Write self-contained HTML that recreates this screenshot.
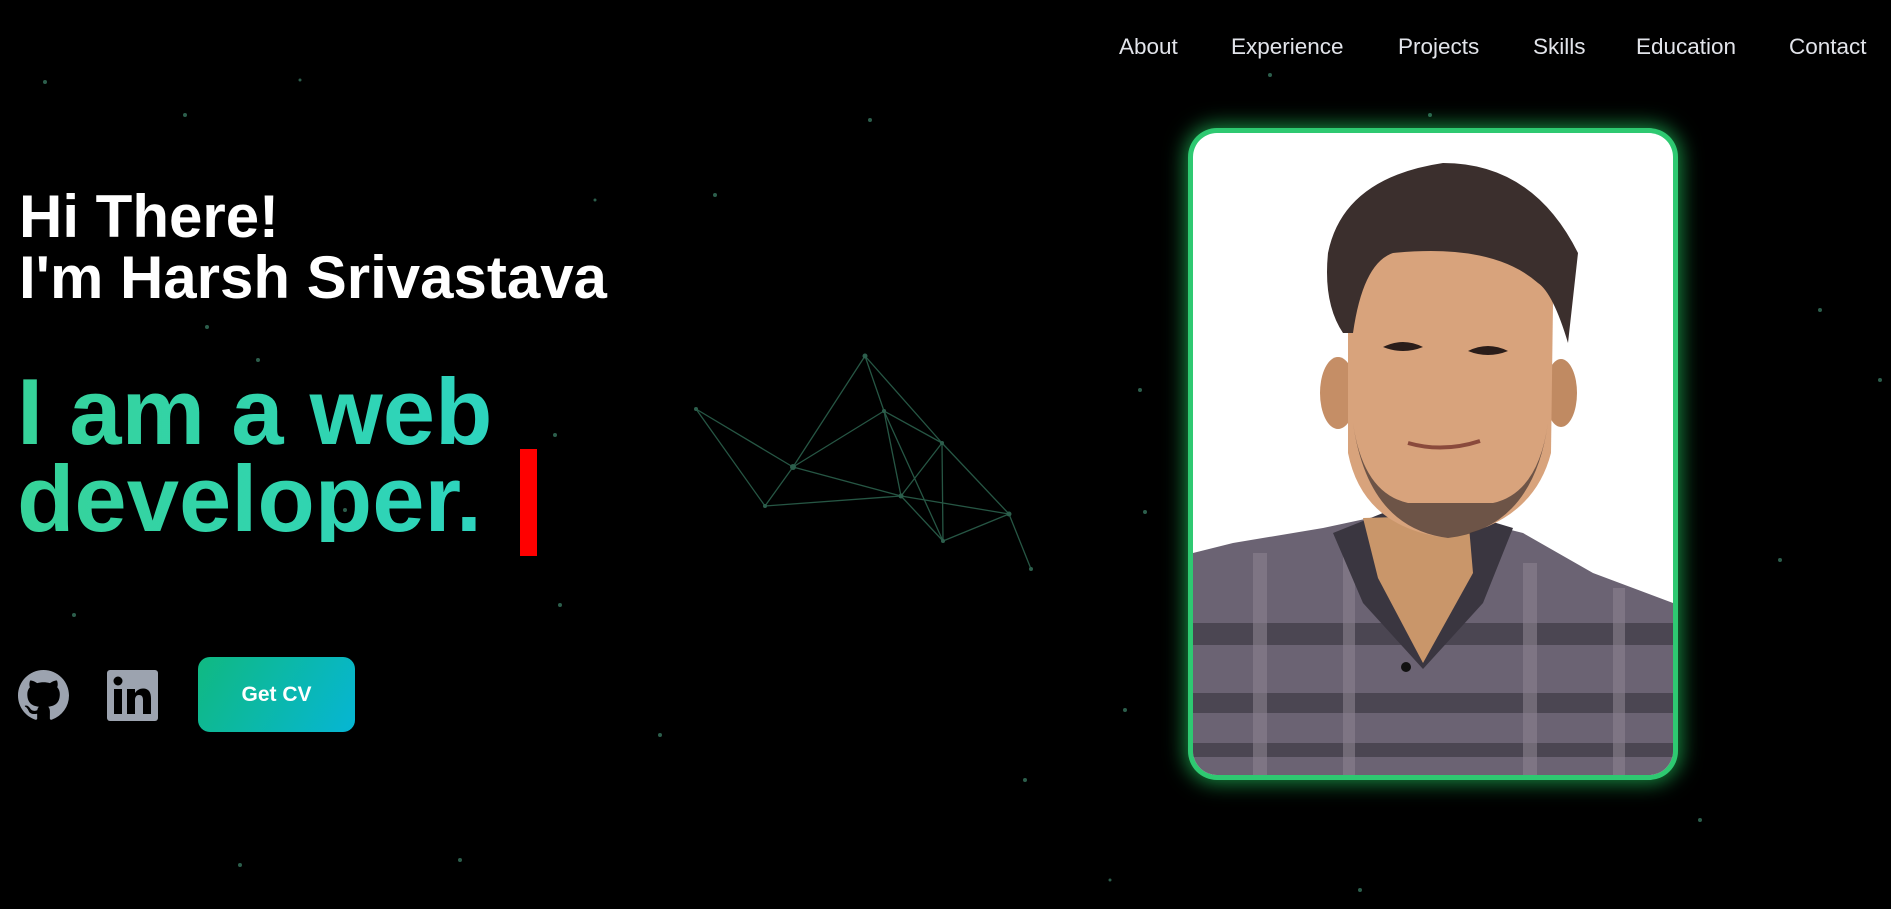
<!DOCTYPE html>
<html><head><meta charset="utf-8"><style>
*{margin:0;padding:0;box-sizing:border-box}
body{width:1891px;height:909px;background:#000;overflow:hidden;position:relative;font-family:"Liberation Sans",sans-serif}
.nav a{position:absolute;top:34px;color:#e2e4ea;font-size:22.5px;text-decoration:none}
.h1{position:absolute;left:19px;top:186px;color:#fff;font-weight:700;font-size:60px;line-height:61px}
.h2{position:absolute;left:17px;top:368px;font-weight:700;font-size:94px;line-height:87px;letter-spacing:0;background:linear-gradient(90deg,#36d399,#2dd4bf);-webkit-background-clip:text;color:transparent}
.cur{position:absolute;left:520px;top:449px;width:17px;height:107px;background:#f00}
.btn{position:absolute;left:198px;top:657px;width:157px;height:75px;border-radius:12px;background:linear-gradient(120deg,#10b981,#06b6d4);color:#fff;font-weight:700;font-size:21px;text-align:center;line-height:75px}
.card{position:absolute;left:1193px;top:133px;width:480px;height:642px;border-radius:24px;background:#fff;overflow:hidden;box-shadow:0 0 0 5px #2ec971,0 0 20px 8px rgba(34,197,94,.7)}
</style></head><body>
<svg width="1891" height="909" style="position:absolute;left:0;top:0">
<g stroke="#2f6b55" stroke-width="1.3" opacity=".8" fill="none">
<path d="M696 409L793 467M696 409L765 506M793 467L765 506M793 467L865 356M793 467L884 411M793 467L901 496M865 356L884 411M865 356L942 443M884 411L942 443M884 411L901 496M884 411L943 541M942 443L901 496M942 443L943 541M942 443L1009 514M901 496L943 541M901 496L1009 514M943 541L1009 514M1009 514L1031 569M765 506L901 496"/></g>
<g fill="#2c5e4c">
<circle cx="865" cy="356" r="2.5"/><circle cx="884" cy="411" r="2"/><circle cx="793" cy="467" r="3"/><circle cx="696" cy="409" r="2"/><circle cx="765" cy="506" r="2"/><circle cx="942" cy="443" r="2"/><circle cx="901" cy="496" r="2.5"/><circle cx="1009" cy="514" r="2.5"/><circle cx="943" cy="541" r="2"/><circle cx="1031" cy="569" r="2"/>
<circle cx="45" cy="82" r="2"/><circle cx="185" cy="115" r="2"/><circle cx="300" cy="80" r="1.5"/><circle cx="258" cy="360" r="2"/><circle cx="207" cy="327" r="2"/><circle cx="74" cy="615" r="2"/><circle cx="345" cy="510" r="2"/><circle cx="660" cy="735" r="2"/><circle cx="1140" cy="390" r="2"/><circle cx="1145" cy="512" r="2"/><circle cx="1125" cy="710" r="2"/><circle cx="1430" cy="115" r="2"/><circle cx="1600" cy="170" r="2"/><circle cx="1820" cy="310" r="2"/><circle cx="1780" cy="560" r="2"/><circle cx="1700" cy="820" r="2"/><circle cx="460" cy="860" r="2"/><circle cx="240" cy="865" r="2"/><circle cx="870" cy="120" r="2"/><circle cx="1025" cy="780" r="2"/><circle cx="1360" cy="890" r="2"/><circle cx="1880" cy="380" r="2"/><circle cx="1455" cy="190" r="2"/><circle cx="715" cy="195" r="2"/><circle cx="1270" cy="75" r="2"/><circle cx="1110" cy="880" r="1.5"/><circle cx="555" cy="435" r="2"/><circle cx="560" cy="605" r="2"/><circle cx="595" cy="200" r="1.5"/></g>
</svg>
<div class="nav"><a style="left:1119px">About</a><a style="left:1231px">Experience</a><a style="left:1398px">Projects</a><a style="left:1533px">Skills</a><a style="left:1636px">Education</a><a style="left:1789px">Contact</a></div>
<div class="h1">Hi There!<br>I'm Harsh Srivastava</div>
<div class="h2">I am a web<br>developer.</div>
<div class="cur"></div>
<svg style="position:absolute;left:18px;top:670px" width="51" height="51" viewBox="0 0 16 16"><path fill="#9ca3af" d="M8 0C3.58 0 0 3.580 0 8c0 3.54 2.29 6.53 5.470 7.59.4.07.55-.17.55-.38 0-.19-.01-.82-.01-1.49-2.010.37-2.530-.49-2.690-.94-.09-.23-.48-.94-.82-1.13-.28-.15-.68-.52-.01-.53.63-.01 1.08.58 1.23.82.72 1.21 1.87.87 2.33.66.07-.52.28-.87.51-1.07-1.78-.2-3.64-.89-3.64-3.95 0-.87.31-1.59.82-2.15-.08-.2-.36-1.02.08-2.12 0 0 .67-.21 2.2.82.64-.18 1.32-.27 2-.27.68 0 1.36.09 2 .27 1.53-1.04 2.2-.82 2.2-.82.44 1.1.16 1.92.08 2.12.51.56.82 1.27.82 2.15 0 3.07-1.87 3.75-3.65 3.95.29.25.54.73.54 1.48 0 1.07-.01 1.93-.01 2.2 0 .21.15.46.55.38A8.013 8.013 0 0016 8c0-4.42-3.58-8-8-8z"/></svg>
<svg style="position:absolute;left:107px;top:670px" width="51" height="51" viewBox="0 0 51 51"><rect width="51" height="51" rx="3" fill="#9ca3af"/><rect x="7" y="19" width="8" height="25" fill="#000"/><circle cx="11" cy="11" r="4.5" fill="#000"/><path d="M20 19h8v4c2-3 5-4.5 8-4.5 6 0 8 4 8 10V44h-8V30c0-3-1-5-4-5s-4 2.5-4 5v14h-8z" fill="#000"/></svg>
<div class="btn">Get CV</div>
<div class="card"><svg width="480" height="642" viewBox="0 0 480 642">
<path d="M0 420 L40 410 L130 395 L200 380 L270 385 L330 400 L400 440 L480 470 L480 642 L0 642Z" fill="#6b6373"/>
<path d="M0 490h480v22H0zM0 560h480v20H0zM0 610h480v14H0z" fill="#3d3a44" opacity=".7"/>
<path d="M60 420h14v222H60zM150 410h12v232h-12zM330 430h14v212h-14zM420 455h12v187h-12z" fill="#8a8290" opacity=".6"/>
<path d="M140 400 L190 380 L270 380 L320 395 L290 470 L230 536 L170 470Z" fill="#3a3640"/>
<path d="M170 385 L275 382 L280 440 L230 530 L185 445Z" fill="#c9966a"/>
<circle cx="213" cy="534" r="5" fill="#111"/>
<ellipse cx="145" cy="260" rx="18" ry="36" fill="#c58e66"/><ellipse cx="368" cy="260" rx="16" ry="34" fill="#c08a62"/>
<path d="M155 150 Q160 90 255 92 Q350 95 360 170 L358 320 Q340 390 255 405 Q170 395 155 320Z" fill="#d8a37c"/>
<path d="M160 290 Q175 395 255 405 Q340 395 355 290 Q345 360 300 370 L215 370 Q170 360 160 290Z" fill="#4a3a36" opacity=".75"/>
<path d="M135 120 Q150 45 250 30 Q340 30 385 120 L375 210 Q360 160 345 150 Q300 110 200 120 Q170 130 160 200 L150 200 Q130 170 135 120Z" fill="#3b2f2d"/>
<path d="M190 214 q20-10 40 0 q-20 8-40 0zM275 218 q20-10 40 0 q-20 8-40 0z" fill="#2a1d1a"/>
<path d="M215 310 q35 10 72 -2" stroke="#8a4a3c" stroke-width="4" fill="none"/>
</svg></div>
</body></html>
